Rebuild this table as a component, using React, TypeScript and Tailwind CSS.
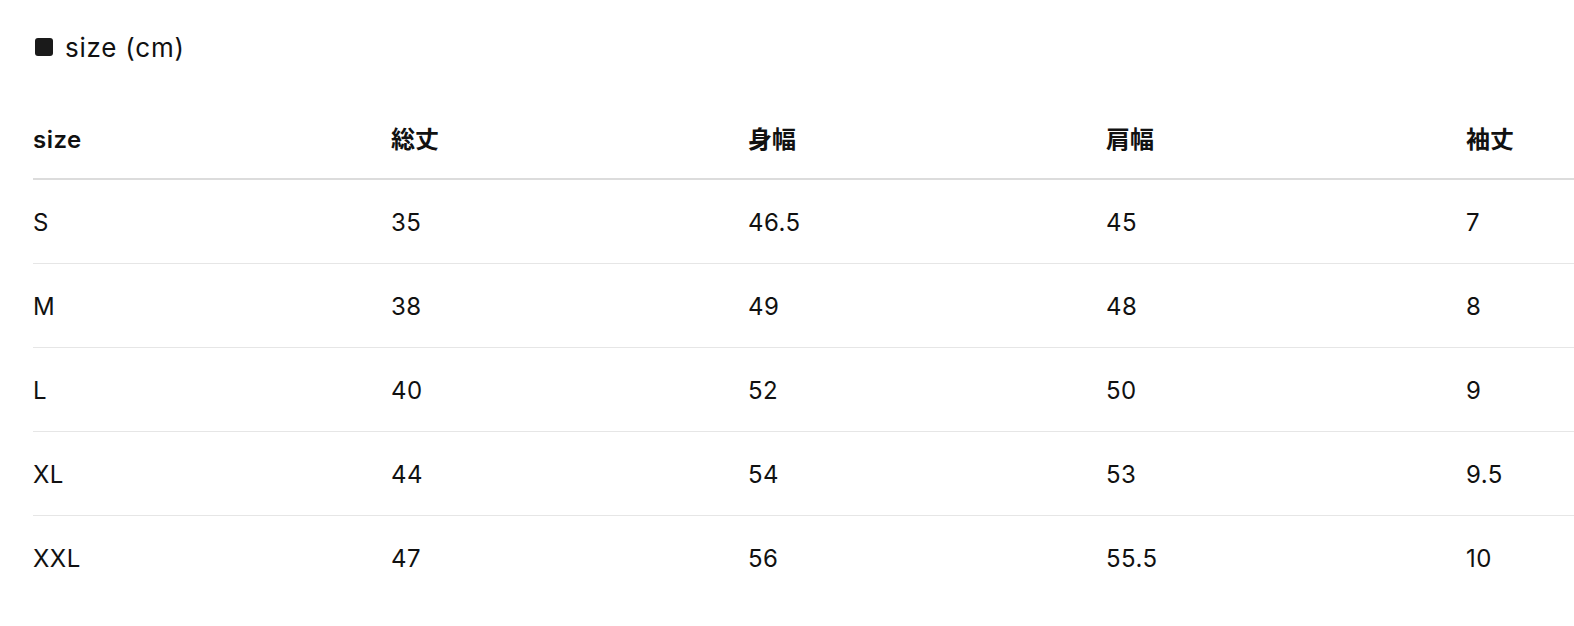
import React from "react";

const headers = ["size", "総丈", "身幅", "肩幅", "袖丈"];
const widths = ["w-[358px]", "w-[357px]", "w-[358px]", "w-[360px]", "w-[358px]"];
const rows = [
  ["S", "35", "46.5", "45", "7"],
  ["M", "38", "49", "48", "8"],
  ["L", "40", "52", "50", "9"],
  ["XL", "44", "54", "53", "9.5"],
  ["XXL", "47", "56", "55.5", "10"],
];

export default function App() {
  return (
    <div
      className="w-full h-[626px] overflow-hidden bg-white text-[#111111]"
      style={{ fontFamily: 'Inter, "Noto Sans CJK JP", sans-serif' }}
    >
      <div className="pl-[33px] pt-[33px]">
        <div className="flex items-center gap-[12px] h-[28px] text-[26px] tracking-[0.03em]">
          <div className="w-[18px] h-[18px] rounded-[3px] bg-[#1a1a1a] ml-[2px]" />
          <span>size (cm)</span>
        </div>
        <table className="mt-[36px] w-[1791px] table-fixed border-collapse text-[24px] tracking-[0.02em]">
          <colgroup>
            {widths.map((w, i) => (
              <col key={i} className={w} />
            ))}
          </colgroup>
          <thead>
            <tr className="border-b-2 border-[#dcdcdc]">
              {headers.map((h, i) => (
                <th
                  key={h}
                  className={
                    i === 0
                      ? "h-[82px] text-left align-middle font-semibold pt-[4px]"
                      : "h-[82px] text-left align-middle font-semibold text-[24px] tracking-normal pt-[4px]"
                  }
                >
                  {h}
                </th>
              ))}
            </tr>
          </thead>
          <tbody>
            {rows.map((r, i) => (
              <tr key={r[0]} className={i < rows.length - 1 ? "border-b border-[#e6e6e6]" : ""}>
                {r.map((c, j) => (
                  <td key={j} className="h-[84px] align-middle pt-[4px]">
                    {c}
                  </td>
                ))}
              </tr>
            ))}
          </tbody>
        </table>
      </div>
    </div>
  );
}
